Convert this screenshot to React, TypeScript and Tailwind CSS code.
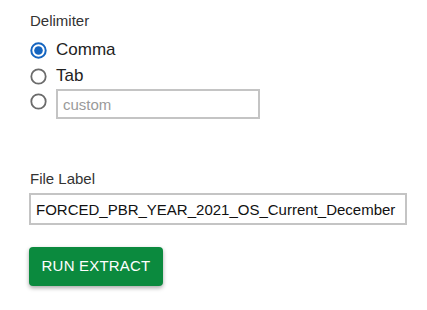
import React from "react";

function Radio({ checked }: { checked?: boolean }) {
  return (
    <svg width="17" height="17" viewBox="0 0 17 17" className="shrink-0">
      {checked ? (
        <>
          <circle cx="8.5" cy="8.5" r="7.2" fill="white" stroke="#1565c0" strokeWidth="2" />
          <circle cx="8.5" cy="8.5" r="4.3" fill="#1565c0" />
        </>
      ) : (
        <circle cx="8.5" cy="8.5" r="7.2" fill="white" stroke="#6b6b6b" strokeWidth="1.8" />
      )}
    </svg>
  );
}

export default function App() {
  return (
    <div className="w-[427px] h-[310px] bg-white pl-[29px] pt-[11px] text-[#222]" style={{ fontFamily: "'Liberation Sans', Arial, sans-serif" }}>
      <div className="text-[15px] leading-[20px] pl-[1px] text-[#333]">Delimiter</div>
      <div className="flex flex-col mt-[6px]">
        <div className="flex items-center h-[26px] gap-[9px] pl-[1px]">
          <Radio checked />
          <span className="text-[17px]">Comma</span>
        </div>
        <div className="flex items-center h-[26px] gap-[9px] pl-[1px]">
          <Radio />
          <span className="text-[17px]">Tab</span>
        </div>
        <div className="flex items-start gap-[9px] pl-[1px]">
          <div className="pt-[4px]"><Radio /></div>
          <input
            placeholder="custom"
            className="w-[204px] h-[30px] border-2 border-[#c4c4c4] px-[5px] text-[15px] outline-none placeholder:text-[#9a9a9a]"
          />
        </div>
      </div>
      <div className="text-[15px] leading-[20px] pl-[1px] text-[#333] mt-[50px]">File Label</div>
      <input
        defaultValue="FORCED_PBR_YEAR_2021_OS_Current_December"
        className="mt-[4px] w-[378px] h-[32px] border-2 border-[#c4c4c4] px-[5px] text-[15px] text-[#111] outline-none"
      />
      <div className="mt-[22px]">
        <button className="w-[134px] h-[39px] rounded-[4px] bg-[#0b8a3e] text-white text-[15px] tracking-[0.2px] shadow-[0_2px_4px_rgba(0,0,0,0.35)]">
          RUN EXTRACT
        </button>
      </div>
    </div>
  );
}
